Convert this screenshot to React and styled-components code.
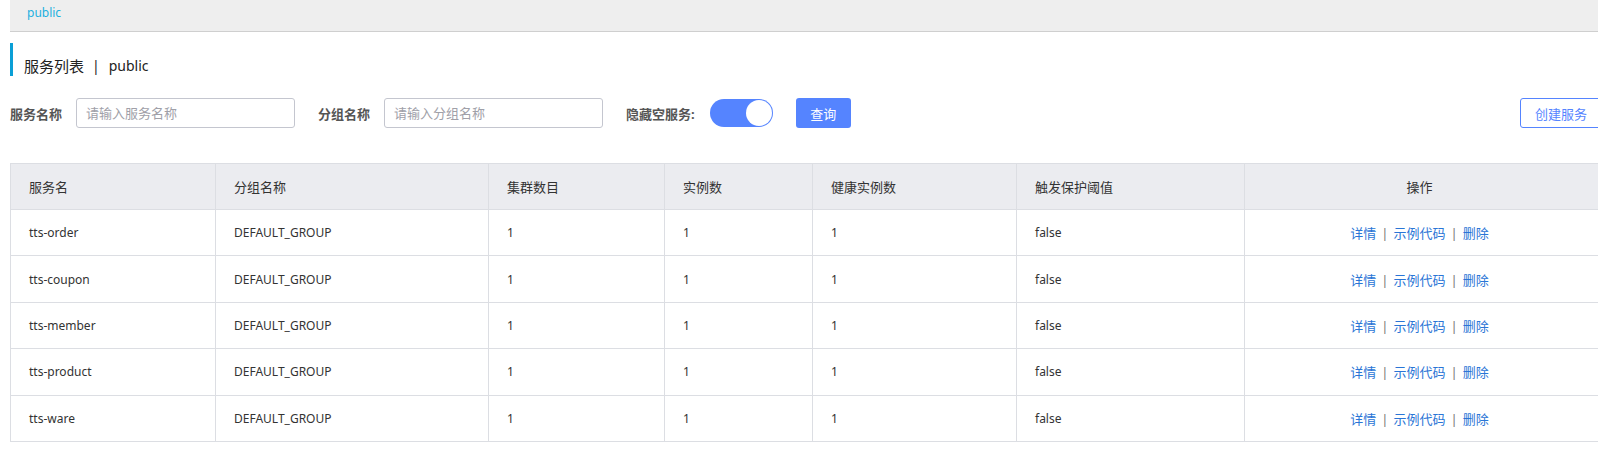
import React, { useState } from "react";
import styled, { createGlobalStyle } from "styled-components";

const GlobalStyle = createGlobalStyle`
    html, body {
        margin: 0;
        padding: 0;
        background: #fff;
        overflow: hidden;
        font-family: "Noto Sans", "Noto Sans CJK SC", sans-serif;
        color: #333;
    }
`;

const services = [
    { name: "tts-order", group: "DEFAULT_GROUP", clusters: 1, instances: 1, healthy: 1, threshold: "false" },
    { name: "tts-coupon", group: "DEFAULT_GROUP", clusters: 1, instances: 1, healthy: 1, threshold: "false" },
    { name: "tts-member", group: "DEFAULT_GROUP", clusters: 1, instances: 1, healthy: 1, threshold: "false" },
    { name: "tts-product", group: "DEFAULT_GROUP", clusters: 1, instances: 1, healthy: 1, threshold: "false" },
    { name: "tts-ware", group: "DEFAULT_GROUP", clusters: 1, instances: 1, healthy: 1, threshold: "false" },
];

const columns = [
    { title: "服务名", width: 205 },
    { title: "分组名称", width: 273 },
    { title: "集群数目", width: 176 },
    { title: "实例数", width: 148 },
    { title: "健康实例数", width: 204 },
    { title: "触发保护阈值", width: 228 },
    { title: "操作", width: 358, center: true },
];

export default function App(){
    const [hideEmpty, setHideEmpty] = useState(true);
    const [serviceName, setServiceName] = useState("");
    const [groupName, setGroupName] = useState("");

    return(
        <>
            <GlobalStyle />
            <Page>
                <NamespaceBar>
                    <NamespaceLink>public</NamespaceLink>
                </NamespaceBar>

                <PageTitle>
                    <TitleCjk>服务列表</TitleCjk>
                    <TitleSep>|</TitleSep>
                    <TitleNs>public</TitleNs>
                </PageTitle>

                <FilterBar>
                    <FilterItem>
                        <FilterLabel>服务名称</FilterLabel>
                        <TextInput
                            value={serviceName}
                            onChange={e => setServiceName(e.target.value)}
                            placeholder="请输入服务名称" />
                    </FilterItem>
                    <FilterItem>
                        <FilterLabel>分组名称</FilterLabel>
                        <TextInput
                            value={groupName}
                            onChange={e => setGroupName(e.target.value)}
                            placeholder="请输入分组名称" />
                    </FilterItem>
                    <FilterItem>
                        <FilterLabel>隐藏空服务:</FilterLabel>
                        <Switch $on={hideEmpty} onClick={() => setHideEmpty(v => !v)}>
                            <SwitchKnob $on={hideEmpty} />
                        </Switch>
                    </FilterItem>
                    <PrimaryButton>查询</PrimaryButton>
                    <OutlineButton>创建服务</OutlineButton>
                </FilterBar>

                <Table>
                    <colgroup>
                        {columns.map(col => <col key={col.title} style={{ width: col.width }} />)}
                    </colgroup>
                    <thead>
                        <tr>
                            {columns.map(col => (
                                <HeadCell key={col.title} $center={col.center}>{col.title}</HeadCell>
                            ))}
                        </tr>
                    </thead>
                    <tbody>
                        {services.map(svc => (
                            <tr key={svc.name}>
                                <Cell>{svc.name}</Cell>
                                <Cell>{svc.group}</Cell>
                                <Cell>{svc.clusters}</Cell>
                                <Cell>{svc.instances}</Cell>
                                <Cell>{svc.healthy}</Cell>
                                <Cell>{svc.threshold}</Cell>
                                <Cell $center>
                                    <ActionLink>详情</ActionLink>
                                    <ActionSep>|</ActionSep>
                                    <ActionLink>示例代码</ActionLink>
                                    <ActionSep>|</ActionSep>
                                    <ActionLink $last>删除</ActionLink>
                                </Cell>
                            </tr>
                        ))}
                    </tbody>
                </Table>
            </Page>
        </>
    );
}

const Page = styled.div`
    width: 1592px;
    margin-left: 10px;
`;

const NamespaceBar = styled.div`
    height: 32px;
    background-color: #eeeeee;
    border-bottom: 1px solid #cfcfcf;
    padding-left: 17px;
    box-sizing: border-box;
`;

const NamespaceLink = styled.span`
    display: inline-block;
    font-size: 12px;
    line-height: 20px;
    padding-top: 1px;
    color: #1cb0e0;
    cursor: pointer;
`;

const PageTitle = styled.div`
    margin-top: 11px;
    height: 33px;
    box-sizing: border-box;
    border-left: 3px solid #0a9fd6;
    padding: 11px 0 0 11px;
    display: flex;
    align-items: center;
    color: #222;
`;

const TitleCjk = styled.span`
    font-size: 15px;
`;

const TitleSep = styled.span`
    font-size: 14px;
    color: #222;
    margin: 0 9px 0 8px;
`;

const TitleNs = styled.span`
    font-size: 14px;
`;

const FilterBar = styled.div`
    margin-top: 22px;
    height: 30px;
    display: flex;
    align-items: center;
    gap: 23px;
`;

const FilterItem = styled.div`
    display: flex;
    align-items: center;
    gap: 14px;
`;

const FilterLabel = styled.span`
    font-size: 13px;
    font-weight: 700;
    color: #555;
    white-space: nowrap;
`;

const TextInput = styled.input`
    width: 219px;
    height: 30px;
    box-sizing: border-box;
    border: 1px solid #c4c6cf;
    border-radius: 3px;
    padding: 0 9px;
    font-family: inherit;
    font-size: 13px;
    color: #333;
    outline: none;
    &::placeholder {
        color: #a0a0a8;
    }
`;

const Switch = styled.div`
    width: 63px;
    height: 28px;
    margin-left: 1px;
    box-sizing: border-box;
    border-radius: 14px;
    background-color: ${({ $on }) => ($on ? "#5584ff" : "#e4e6ed")};
    position: relative;
    cursor: pointer;
`;

const SwitchKnob = styled.span`
    position: absolute;
    top: 1px;
    left: ${({ $on }) => ($on ? "36px" : "1px")};
    width: 26px;
    height: 26px;
    border-radius: 50%;
    background-color: #fff;
`;

const PrimaryButton = styled.button`
    width: 55px;
    height: 30px;
    border: none;
    border-radius: 3px;
    background-color: #5584ff;
    color: #fff;
    font-family: inherit;
    font-size: 13px;
    padding: 0;
    cursor: pointer;
`;

const OutlineButton = styled.button`
    margin-left: auto;
    height: 30px;
    padding: 0 14px;
    border: 1px solid #5584ff;
    border-radius: 3px;
    background-color: #fff;
    color: #5584ff;
    font-family: inherit;
    font-size: 13px;
    cursor: pointer;
`;

const Table = styled.table`
    margin-top: 35px;
    width: 1592px;
    table-layout: fixed;
    border-collapse: collapse;
    border: 1px solid #dcdee3;
`;

const HeadCell = styled.th`
    height: 45px;
    padding: ${({ $center }) => ($center ? "0 26px 0 18px" : "0 18px")};
    background-color: #ebecf0;
    border: 1px solid #dcdee3;
    font-size: 13px;
    font-weight: 400;
    color: #333;
    text-align: ${({ $center }) => ($center ? "center" : "left")};
`;

const Cell = styled.td`
    height: 45.4px;
    padding: ${({ $center }) => ($center ? "0 26px 0 18px" : "0 18px")};
    border: 1px solid #dcdee3;
    font-size: 12px;
    color: #333;
    text-align: ${({ $center }) => ($center ? "center" : "left")};
`;

const ActionLink = styled.a`
    font-size: 13px;
    color: #2a75d6;
    cursor: pointer;
    margin-right: ${({ $last }) => ($last ? "0" : "5px")};
`;

const ActionSep = styled.span`
    font-size: 13px;
    color: #777;
    margin-right: 5px;
`;
